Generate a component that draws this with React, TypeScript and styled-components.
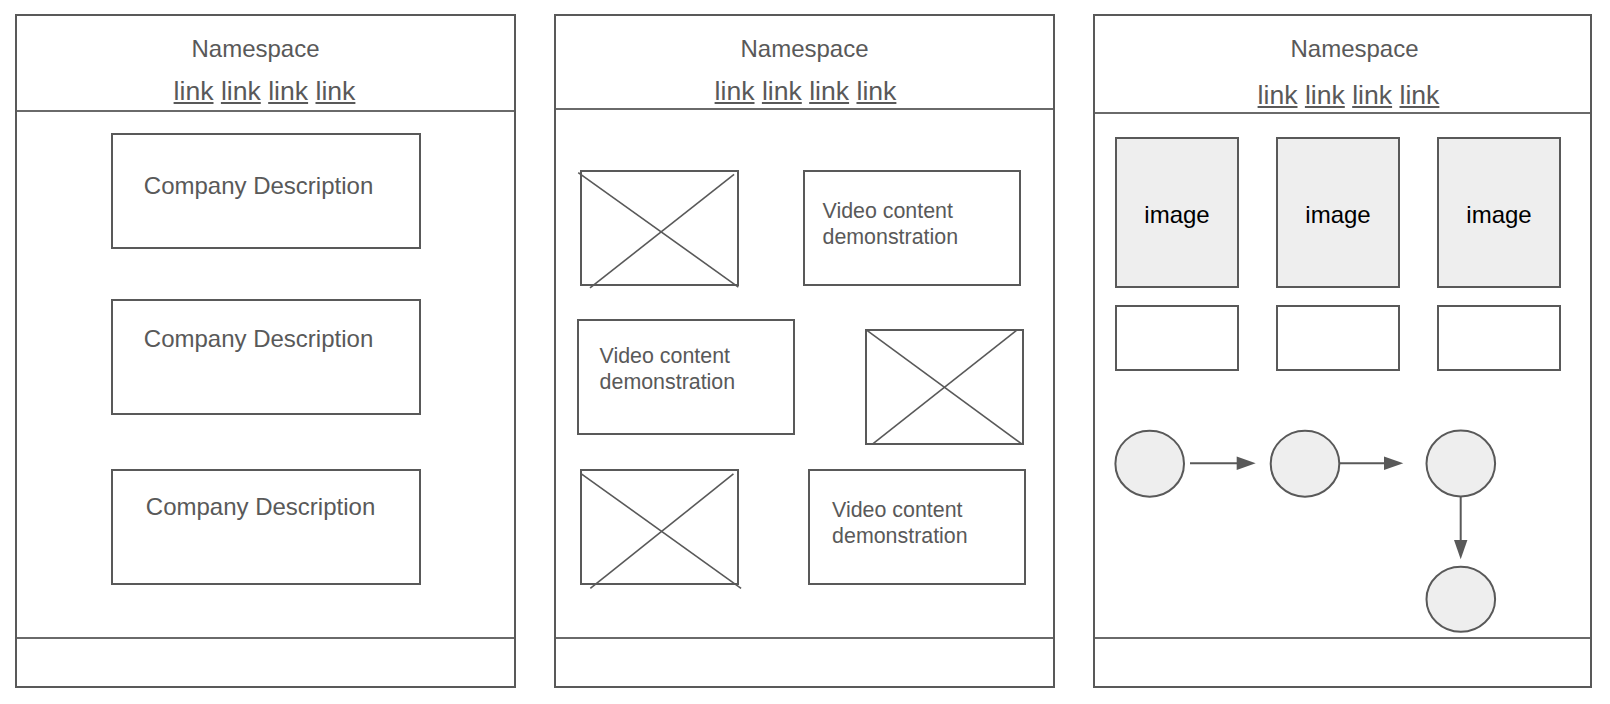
import React from 'react';
import styled, { createGlobalStyle } from 'styled-components';

const INK = '#595959';
const RULE = '#6a6a6a';
const FILL = '#eeeeee';

const GlobalStyle = createGlobalStyle`
  html, body { margin: 0; padding: 0; background: #ffffff; }
  body {
    font-family: "Liberation Sans", Arial, Helvetica, sans-serif;
    color: ${INK};
  }
`;

const Page = styled.main`
  display: flex;
  gap: 38px;
  width: 1610px;
  height: 704px;
  box-sizing: border-box;
  padding: 14px 0 0 15px;
`;

const Panel = styled.section<{ $w: number }>`
  width: ${(p) => p.$w}px;
  height: 674px;
  box-sizing: border-box;
  border: 2px solid ${INK};
  display: flex;
  flex-direction: column;
  flex: none;
`;

const Header = styled.header<{ $h: number }>`
  height: ${(p) => p.$h}px;
  flex: none;
  box-sizing: border-box;
  border-bottom: 2px solid ${RULE};
  display: flex;
  flex-direction: column;
  align-items: stretch;
  padding-top: 19px;
`;

const Title = styled.div<{ $shift?: number }>`
  font-size: 24px;
  line-height: 28px;
  text-align: center;
  padding-left: ${(p) => Math.max(0, (p.$shift ?? 0) * 2)}px;
  padding-right: ${(p) => Math.max(0, -(p.$shift ?? 0) * 2)}px;
`;

const LinkRow = styled.nav<{ $mt: number; $shift?: number }>`
  margin-top: ${(p) => p.$mt}px;
  font-size: 26.6px;
  line-height: 30px;
  text-align: center;
  padding-left: ${(p) => Math.max(0, (p.$shift ?? 0) * 2)}px;
  padding-right: ${(p) => Math.max(0, -(p.$shift ?? 0) * 2)}px;
`;

const NavLink = styled.a`
  color: ${INK};
  text-decoration: underline;
  text-decoration-thickness: 2px;
  text-underline-offset: 2px;
`;

const Content = styled.div`
  flex: 1;
  min-height: 0;
  display: flex;
  flex-direction: column;
  align-items: flex-start;
`;

const Footer = styled.footer`
  height: 49px;
  flex: none;
  box-sizing: border-box;
  border-top: 2px solid ${RULE};
`;

/* Panel 1 */
const DescBox = styled.div<{ $mt: number; $pt: number; $pl: number }>`
  width: 310px;
  height: 116px;
  box-sizing: border-box;
  border: 2px solid ${INK};
  margin: ${(p) => p.$mt}px 0 0 94px;
  padding: ${(p) => p.$pt}px 0 0 ${(p) => p.$pl}px;
  font-size: 24px;
  line-height: 28px;
`;

/* Panel 2 */
const Row = styled.div<{ $mt: number }>`
  display: flex;
  align-items: flex-start;
  margin-top: ${(p) => p.$mt}px;
`;

const Placeholder = styled.div<{ $ml: number; $mt?: number }>`
  position: relative;
  width: 159px;
  height: 116px;
  box-sizing: border-box;
  border: 2px solid ${INK};
  margin-left: ${(p) => p.$ml}px;
  margin-top: ${(p) => p.$mt ?? 0}px;
  flex: none;
`;

const Cross = styled.svg`
  position: absolute;
  left: -2px;
  top: -2px;
  width: calc(100% + 4px);
  height: calc(100% + 4px);
  overflow: visible;
`;

const VideoCard = styled.div<{ $ml: number; $pt: number; $pl: number }>`
  width: 218px;
  height: 116px;
  box-sizing: border-box;
  border: 2px solid ${INK};
  margin-left: ${(p) => p.$ml}px;
  padding: ${(p) => p.$pt}px 0 0 ${(p) => p.$pl}px;
  font-size: 21.4px;
  line-height: 26px;
  flex: none;
`;

/* Panel 3 */
const Gallery = styled.div`
  display: grid;
  grid-template-columns: repeat(3, 124px);
  grid-template-rows: 151px 66px;
  column-gap: 37px;
  row-gap: 16.5px;
  margin: 23px 0 0 20px;
`;

const ImageTile = styled.div`
  box-sizing: border-box;
  border: 2px solid ${INK};
  background: ${FILL};
  display: flex;
  align-items: center;
  justify-content: center;
  padding-top: 4px;
  color: #000000;
  font-size: 24px;
  line-height: 28px;
`;

const Caption = styled.div`
  box-sizing: border-box;
  border: 2px solid ${INK};
  background: #ffffff;
`;

const Diagram = styled.svg`
  display: block;
  margin-top: 14.5px;
  width: 495px;
  height: 250px;
  overflow: visible;
`;

type Line = [string, string, string, string];

const PlaceholderX = ({ ml, mt, lines }: { ml: number; mt?: number; lines: Line[] }) => (
  <Placeholder $ml={ml} $mt={mt}>
    <Cross>
      {lines.map(([x1, y1, x2, y2], i) => (
        <line key={i} x1={x1} y1={y1} x2={x2} y2={y2} stroke={INK} strokeWidth={1.6} />
      ))}
    </Cross>
  </Placeholder>
);

const Links = ({ mt, shift }: { mt: number; shift?: number }) => (
  <LinkRow $mt={mt} $shift={shift}>
    <NavLink>link</NavLink> <NavLink>link</NavLink> <NavLink>link</NavLink>{' '}
    <NavLink>link</NavLink>
  </LinkRow>
);

const Node = ({ cx, cy, ry = 33 }: { cx: number; cy: number; ry?: number }) => (
  <ellipse cx={cx} cy={cy} rx={34.3} ry={ry} fill={FILL} stroke={INK} strokeWidth={2} />
);

export default function App() {
  return (
    <>
      <GlobalStyle />
      <Page>
        <Panel $w={501}>
          <Header $h={96}>
            <Title $shift={-10}>Namespace</Title>
            <Links mt={13} shift={-1} />
          </Header>
          <Content>
            <DescBox $mt={20.5} $pt={37.4} $pl={30.8}>Company Description</DescBox>
            <DescBox $mt={50.3} $pt={24} $pl={30.8}>Company Description</DescBox>
            <DescBox $mt={54.4} $pt={22} $pl={32.8}>Company Description</DescBox>
          </Content>
          <Footer />
        </Panel>

        <Panel $w={501}>
          <Header $h={94}>
            <Title>Namespace</Title>
            <Links mt={13} shift={1} />
          </Header>
          <Content>
            <Row $mt={60.4}>
              <PlaceholderX
                ml={24}
                lines={[
                  ['-1.1%', '2.3%', '99.6%', '100.9%'],
                  ['96.9%', '3.7%', '6.3%', '101.7%'],
                ]}
              />
              <VideoCard $ml={64} $pt={26} $pl={17.5}>
                Video content
                <br />
                demonstration
              </VideoCard>
            </Row>
            <Row $mt={32.9}>
              <VideoCard $ml={21} $pt={22} $pl={20.6}>
                Video content
                <br />
                demonstration
              </VideoCard>
              <PlaceholderX
                ml={70}
                mt={9.3}
                lines={[
                  ['1%', '1%', '99%', '99.5%'],
                  ['95.5%', '1%', '4.5%', '99.5%'],
                ]}
              />
            </Row>
            <Row $mt={24.6}>
              <PlaceholderX
                ml={24}
                lines={[
                  ['0.4%', '3.7%', '101.3%', '102.9%'],
                  ['96.5%', '4.3%', '6.5%', '102.9%'],
                ]}
              />
              <VideoCard $ml={68.5} $pt={26} $pl={22.6}>
                Video content
                <br />
                demonstration
              </VideoCard>
            </Row>
          </Content>
          <Footer />
        </Panel>

        <Panel $w={499}>
          <Header $h={98}>
            <Title $shift={12}>Namespace</Title>
            <Links mt={17.2} shift={6} />
          </Header>
          <Content>
            <Gallery>
              <ImageTile>image</ImageTile>
              <ImageTile>image</ImageTile>
              <ImageTile>image</ImageTile>
              <Caption />
              <Caption />
              <Caption />
            </Gallery>
            <Diagram viewBox="0 0 495 250">
              <Node cx={54.7} cy={78.7} />
              <Node cx={210} cy={78.7} />
              <Node cx={365.8} cy={78.5} />
              <Node cx={365.8} cy={214.2} ry={32.5} />
              <line x1={95} y1={78.3} x2={142} y2={78.3} stroke={INK} strokeWidth={2} />
              <polygon points="141.7,71.6 160.7,78.3 141.7,85" fill={INK} />
              <line x1={244} y1={78.3} x2={289.5} y2={78.3} stroke={INK} strokeWidth={2} />
              <polygon points="289,71.6 308.3,78.3 289,85" fill={INK} />
              <line x1={365.7} y1={111} x2={365.7} y2={155.5} stroke={INK} strokeWidth={2} />
              <polygon points="359,155 365.7,174.3 372.4,155" fill={INK} />
            </Diagram>
          </Content>
          <Footer />
        </Panel>
      </Page>
    </>
  );
}
